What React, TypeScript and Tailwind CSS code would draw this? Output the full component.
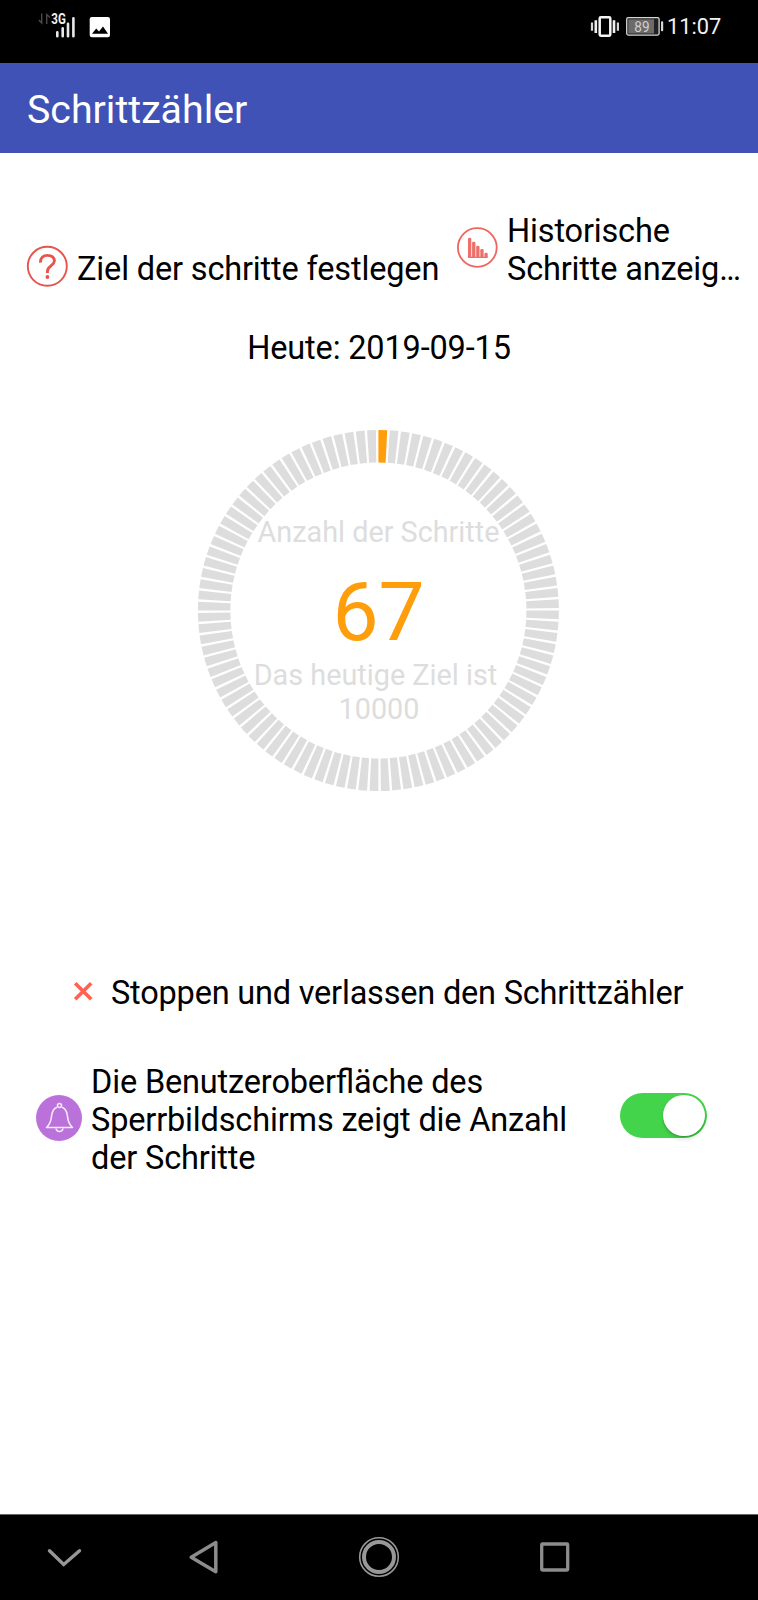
import React from "react";

const CENTER = 181;
const OUTER = 180.5;
const INNER = 148;

function point(radius: number, degrees: number): string {
  const a = (degrees * Math.PI) / 180;
  return `${(CENTER + radius * Math.sin(a)).toFixed(2)} ${(CENTER - radius * Math.cos(a)).toFixed(2)}`;
}

function segment(index: number): string {
  const from = index * 3.6;
  const to = from + 2.8;
  return `M${point(OUTER, from)}A${OUTER} ${OUTER} 0 0 1 ${point(OUTER, to)}L${point(INNER, to)}A${INNER} ${INNER} 0 0 0 ${point(INNER, from)}Z`;
}

function StatusBar() {
  return (
    <div className="flex h-[63px] items-start bg-black pl-[38px] tracking-normal">
      <svg className="mt-3 h-7 w-10" viewBox="38 12 40 28">
        <g fill="none" stroke="#4a4a4a" strokeWidth="1.4">
          <path d="M41.7 13.5V23L38.8 20" />
          <path d="M46.7 24V14.5L50 17.5" />
        </g>
        <text x="51.3" y="24" textLength="14.5" lengthAdjust="spacingAndGlyphs" fill="#f2f2f2" className="font-['Roboto',sans-serif] text-[14px] font-bold">3G</text>
        <g stroke="#e8e8e8" strokeWidth="2.6" strokeLinecap="round">
          <path d="M57.3 32.2V36.3M62.7 28.2V36.3M68 23.7V36.3M73.4 18.2V36.3" />
        </g>
      </svg>
      <svg className="ml-[11px] mt-4 h-[22px] w-[22px]" viewBox="0 0 22 22">
        <rect x="0.7" y="1" width="20.3" height="20.3" rx="2.2" fill="#fff" />
        <path d="M3 17.7L7.2 12.5L10 15.6L14 10.5L19 17.7Z" fill="#000" />
      </svg>
      <svg className="ml-[479px] mt-[15px] h-[23px] w-[30px]" viewBox="590 15 30 23">
        <rect x="599.7" y="17.2" width="10.6" height="18.6" rx="1.2" fill="none" stroke="#f5f5f5" strokeWidth="2.5" />
        <path d="M592 22.5V30.7M617.9 22.5V30.7" stroke="#d8d8d8" strokeWidth="2.2" />
        <path d="M595.8 20.3V33M614 20.3V33" stroke="#f0f0f0" strokeWidth="2.6" />
      </svg>
      <svg className="ml-[5px] mt-4 h-[21px] w-[39px]" viewBox="625 16 39 21">
        <rect x="626.7" y="17.7" width="32.4" height="17.4" rx="1.5" fill="#222" stroke="#d5d5d5" strokeWidth="1.3" />
        <rect x="628.3" y="19.3" width="25.7" height="14.2" fill="#6b6b6b" />
        <rect x="661" y="21.3" width="2.2" height="10" rx="0.8" fill="#d5d5d5" />
        <text x="634.3" y="31.8" textLength="15.2" lengthAdjust="spacingAndGlyphs" fill="#d0d0d0" className="font-['Roboto',sans-serif] text-[14px]">89</text>
      </svg>
      <span className="ml-[3px] mt-[13px] whitespace-nowrap text-[21.8px] leading-[27px] text-[#f2f2f2]">11:07</span>
    </div>
  );
}

function QuestionIcon() {
  return (
    <svg className="mt-[45px] h-[42px] w-[42px] shrink-0" viewBox="0 0 42 42" fill="none" stroke="#e8534e">
      <circle cx="21.3" cy="21.3" r="19.5" strokeWidth="1.9" />
      <path d="M14.5 17.7C14.2 12.8 17.2 10.4 21.4 10.4C25.7 10.4 28.6 12.7 28.4 16C28.2 20.8 21.4 20.5 21.4 26.5V28" strokeWidth="2.9" />
      <circle cx="21.4" cy="32" r="1.9" fill="#e8534e" stroke="none" />
    </svg>
  );
}

function HistoryIcon() {
  return (
    <svg className="mt-[25px] h-[42px] w-[42px] shrink-0" viewBox="0 0 42 42">
      <circle cx="21.3" cy="21.5" r="19.4" fill="none" stroke="#ef655f" strokeWidth="1.8" />
      <g fill="#ec6f69">
        <rect x="12" y="11.7" width="3.3" height="20.3" rx="1.4" />
        <rect x="16.1" y="15.7" width="3.3" height="16.3" rx="1.4" />
        <rect x="20.2" y="19.7" width="3.3" height="12.3" rx="1.4" />
        <rect x="24.3" y="22.9" width="3.3" height="9.1" rx="1.4" />
        <rect x="28.4" y="26.7" width="3.3" height="5.3" rx="1.4" />
        <rect x="12" y="30.8" width="19.7" height="1.2" rx="0.5" />
      </g>
    </svg>
  );
}

function StepRing() {
  return (
    <div className="mx-auto mt-[62px] grid h-[362px] w-[362px] tracking-normal">
      <svg className="col-start-1 row-start-1 h-[362px] w-[362px] overflow-visible" viewBox="0.6 -0.5 362 362">
        {Array.from({ length: 100 }, (_, i) => (
          <path key={i} d={segment(i)} fill={i === 0 ? "#ff9d0a" : "#dddddd"} />
        ))}
      </svg>
      <div className="col-start-1 row-start-1 flex flex-col items-center whitespace-nowrap text-[28.8px] leading-[34px] text-[#dddddd]">
        <span className="-ml-[1px] mt-[86px]">Anzahl der Schritte</span>
        <span className="-ml-[1px] mt-[15px] text-[82px] leading-[96px] text-[#ff9d0a]">67</span>
        <span className="-ml-[7px] -mt-[2px]">Das heutige Ziel ist</span>
        <span>10000</span>
      </div>
    </div>
  );
}

export default function App() {
  return (
    <div className="flex h-[1600px] w-[758px] flex-col overflow-hidden bg-white font-['Roboto',sans-serif] text-[32.5px] leading-[38px] tracking-[-0.16px] text-black [font-feature-settings:'liga'_1]">
      <StatusBar />
      <header className="flex h-[90px] items-center bg-[#4052b5] pl-[27px] pt-1 text-[39.3px] tracking-normal text-white">Schrittzähler</header>
      <main className="flex flex-1 flex-col">
        <div className="flex pl-[26px] pt-[48px]">
          <div className="mt-3 flex w-[413px] whitespace-nowrap">
            <div className="-mt-[13px]"><QuestionIcon /></div>
            <span className="ml-[9px] mt-[37px]">Ziel der schritte festlegen</span>
          </div>
          <div className="ml-[17px] flex whitespace-nowrap">
            <HistoryIcon />
            <p className="ml-[9px] mt-[11px]">Historische<br />Schritte anzeig…</p>
          </div>
        </div>
        <p className="mt-[41px] text-center">Heute: 2019-09-15</p>
        <StepRing />
        <div className="mt-[183px] flex whitespace-nowrap pl-[73px]">
          <svg className="mt-[7px] h-5 w-5" viewBox="0 0 20 20" fill="none" stroke="#ff6250" strokeWidth="3.6">
            <path d="M2.2 2.2L18.2 18.2M18.2 2.2L2.2 18.2" />
          </svg>
          <span className="ml-[18px] tracking-[-0.2px]">Stoppen und verlassen den Schrittzähler</span>
        </div>
        <div className="mt-[51px] flex pl-9">
          <svg className="mt-8 h-[46px] w-[46px]" viewBox="0 0 46 46">
            <circle cx="23" cy="23" r="23" fill="#bb71da" />
            <g fill="none" stroke="#f6eafa" strokeWidth="1.6">
              <circle cx="23.5" cy="10.5" r="2" />
              <path d="M21 12.2C16.8 13.6 15.8 17.8 15.4 22C15 27 13.8 29.2 10.5 32.5H36.5C33.2 29.2 32 27 31.6 22C31.2 17.8 30.2 13.6 26 12.2" strokeLinejoin="round" />
              <path d="M20 33.5C20.6 37.5 26.4 37.5 27 33.5" />
            </g>
          </svg>
          <p className="ml-[9px] whitespace-nowrap">Die Benutzeroberfläche des<br />Sperrbildschirms zeigt die Anzahl<br />der Schritte</p>
          <div className="ml-auto mr-[51px] mt-[30px] flex h-[45px] w-[87px] items-center justify-end rounded-full bg-[#43d44b] pr-[2px]">
            <div className="h-[41px] w-[42px] rounded-full bg-white shadow-[0_5px_3px_rgba(0,0,0,0.06),0_1px_2px_rgba(0,0,0,0.25)]" />
          </div>
        </div>
      </main>
      <nav className="h-[86px] border-t border-[#666] bg-black">
        <svg className="h-[85px] w-[758px]" viewBox="0 1515 758 85" fill="none" stroke="#979797">
          <path d="M49.5 1550.7L63.7 1564.5L79.5 1550.7" strokeWidth="3.4" strokeLinecap="round" />
          <path d="M215.8 1542.5V1571.8L191.2 1557.3Z" stroke="#8c8c8c" strokeWidth="3.5" strokeLinejoin="round" />
          <circle cx="379" cy="1557" r="19.3" strokeWidth="1.6" />
          <circle cx="379" cy="1557" r="15" strokeWidth="4" />
          <rect x="541.7" y="1544" width="26" height="26" rx="0.8" stroke="#8c8c8c" strokeWidth="3.3" />
        </svg>
      </nav>
    </div>
  );
}
